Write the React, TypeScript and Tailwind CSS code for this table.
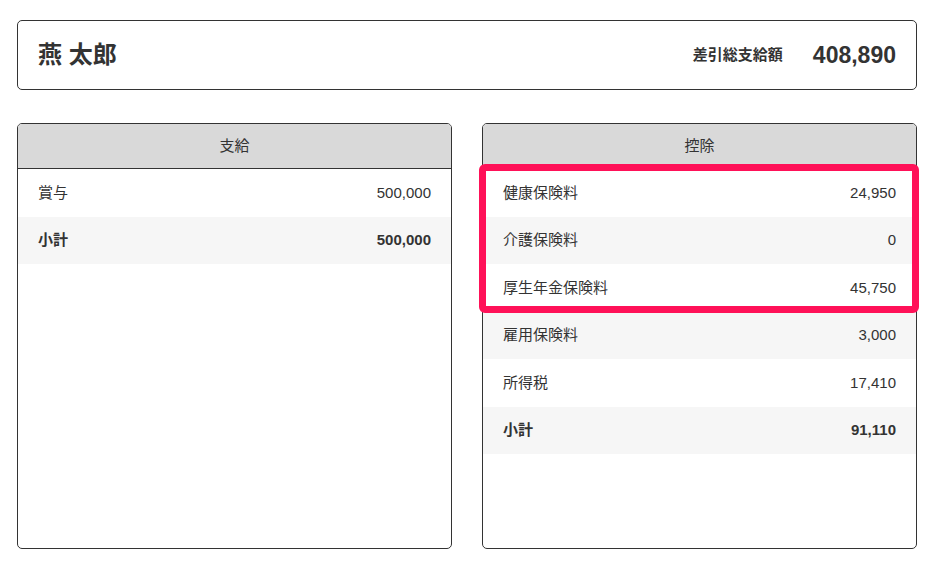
const earnings = [{ label: "賞与", value: "500,000" }];
const deductions = [
  { label: "健康保険料", value: "24,950" },
  { label: "介護保険料", value: "0" },
  { label: "厚生年金保険料", value: "45,750" },
  { label: "雇用保険料", value: "3,000" },
  { label: "所得税", value: "17,410" },
];

type Row = { label: string; value: string };

function Panel({ title, rows, total }: { title: string; rows: Row[]; total: string }) {
  return (
    <div className="flex flex-col border border-[#333] rounded-[5px] overflow-hidden">
      <div className="h-[45px] shrink-0 bg-[#d9d9d9] border-b border-[#333] flex items-center justify-center text-[15px]">
        {title}
      </div>
      {rows.map((r, i) => (
        <div
          key={r.label}
          className={
            "h-[47.5px] shrink-0 flex items-center justify-between px-5 text-[15px] " +
            (i % 2 === 1 ? "bg-[#f6f6f6]" : "bg-white")
          }
        >
          <span>{r.label}</span>
          <span>{r.value}</span>
        </div>
      ))}
      <div
        className={
          "h-[47.5px] shrink-0 flex items-center justify-between px-5 text-[15px] font-bold " +
          (rows.length % 2 === 1 ? "bg-[#f6f6f6]" : "bg-white")
        }
      >
        <span>小計</span>
        <span>{total}</span>
      </div>
    </div>
  );
}

export default function App() {
  return (
    <div
      className="relative w-[936px] h-[568px] bg-white pt-5 pl-[17px] pr-[19px] text-[#333]"
      style={{ fontFamily: '"Liberation Sans", "Noto Sans CJK JP", sans-serif' }}
    >
      <div className="h-[70px] border border-[#333] rounded-[5px] flex items-center justify-between px-5">
        <h1 className="text-[24px] font-bold">燕 太郎</h1>
        <div className="flex items-center gap-[30px]">
          <span className="text-[15px] font-bold">差引総支給額</span>
          <span className="text-[23px] font-bold">408,890</span>
        </div>
      </div>

      <div className="mt-[33px] grid grid-cols-2 gap-[30px] h-[426px]">
        <Panel title="支給" rows={earnings} total="500,000" />
        <Panel title="控除" rows={deductions} total="91,110" />
      </div>

      {/* highlight annotation */}
      <div className="absolute left-[479px] top-[164px] w-[440px] h-[149px] border-[7px] border-[#ff1158] rounded-[6px]" />
    </div>
  );
}
